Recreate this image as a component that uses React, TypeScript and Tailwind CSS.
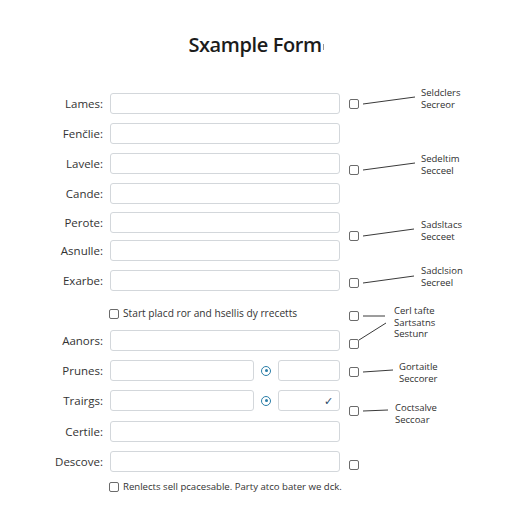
import React from 'react';

type Row = {
  label: string;
  mt: string;
  split?: boolean;
  check?: boolean;
};

const rows: Row[] = [
  { label: 'Lames:', mt: 'mt-0' },
  { label: 'Fenčlie:', mt: 'mt-[9px]' },
  { label: 'Lavele:', mt: 'mt-[9px]' },
  { label: 'Cande:', mt: 'mt-[9px]' },
  { label: 'Perote:', mt: 'mt-[8px]' },
  { label: 'Asnulle:', mt: 'mt-[7px]' },
  { label: 'Exarbe:', mt: 'mt-[9px]' },
];

const rows2: Row[] = [
  { label: 'Aanors:', mt: 'mt-[9px]' },
  { label: 'Prunes:', mt: 'mt-[9px]', split: true },
  { label: 'Trairgs:', mt: 'mt-[9px]', split: true, check: true },
  { label: 'Certile:', mt: 'mt-[10px]' },
  { label: 'Descove:', mt: 'mt-[9px]' },
];

const callouts = [
  { box: [354, 104], line: [363, 104, 415, 97], text: ['Seldclers', 'Secreor'], at: [421, 87] },
  { box: [354, 170], line: [363, 170, 415, 163], text: ['Sedeltim', 'Secceel'], at: [421, 153] },
  { box: [354, 236], line: [363, 236, 414, 229], text: ['Sadsltacs', 'Secceet'], at: [421, 219] },
  { box: [354, 283], line: [363, 283, 414, 276], text: ['Sadclsion', 'Secreel'], at: [421, 265] },
  { box: [354, 316], line: [363, 316, 385, 316], text: ['Cerl tafte', 'Sartsatns', 'Sestunr'], at: [394, 305] },
  { box: [354, 344], line: [359, 340, 386, 323], text: [], at: [0, 0] },
  { box: [354, 372], line: [363, 372, 393, 370], text: ['Gortaitle', 'Seccorer'], at: [399, 361] },
  { box: [354, 411], line: [363, 411, 388, 410], text: ['Coctsalve', 'Seccoar'], at: [395, 402] },
  { box: [354, 465], line: null, text: [], at: [0, 0] },
];

function Radio() {
  return (
    <span className="flex w-[24px] justify-center">
      <span className="flex h-[10px] w-[10px] items-center justify-center rounded-full border-[1.5px] border-[#2b7ea8]">
        <span className="h-[3px] w-[3px] rounded-full bg-[#2b7ea8]" />
      </span>
    </span>
  );
}

function FormRow({ row }: { row: Row }) {
  return (
    <div className={`flex h-[21px] items-center ${row.mt}`}>
      <label className="w-[103px] text-right text-[11.5px] text-[#333]">{row.label}</label>
      <div className="ml-[7px] flex items-center">
        {row.split ? (
          <>
            <div className="h-[21px] w-[144px] rounded-[3px] border border-[#d3d7db] bg-white" />
            <Radio />
            <div className="relative h-[21px] w-[62px] rounded-[3px] border border-[#d3d7db] bg-white">
              {row.check && (
                <span className="absolute right-[6px] top-[2px] text-[11px] text-[#2a4a6a]">✓</span>
              )}
            </div>
          </>
        ) : (
          <div className="h-[21px] w-[230px] rounded-[3px] border border-[#d3d7db] bg-white" />
        )}
      </div>
    </div>
  );
}

function CheckRow({ text, mt, size }: { text: string; mt: string; size: string }) {
  return (
    <div className={`flex h-[14px] items-center pl-[109px] ${mt}`}>
      <span className="h-[10px] w-[10px] shrink-0 rounded-[2px] border border-[#6b6b6b] bg-white" />
      <span className={`ml-[4px] whitespace-nowrap text-[#333] ${size}`}>{text}</span>
    </div>
  );
}

export default function App() {
  return (
    <div className="relative h-[512px] w-[512px] overflow-hidden bg-white font-['Open_Sans',sans-serif]">
      <div className="flex h-[28px] items-center justify-center mt-[31px]">
        <h1 className="text-[20px] font-semibold leading-[28px] tracking-[-0.4px] text-[#1c1c1c]">Sxample Form</h1>
        <span className="ml-[1px] mt-[4px] h-[6px] w-[1px] bg-[#999]" />
      </div>

      <div className="mt-[34px] flex flex-col">
        {rows.map((r) => (
          <FormRow key={r.label} row={r} />
        ))}
        <CheckRow mt="mt-[16px]" size="text-[10.2px]" text="Start placd ror and hsellis dy rrecetts" />
        {rows2.map((r) => (
          <FormRow key={r.label} row={r} />
        ))}
        <CheckRow mt="mt-[8px]" size="text-[9.6px]" text="Renlects sell pcacesable. Party atco bater we dck." />
      </div>

      {/* callout annotations on the right */}
      <svg className="pointer-events-none absolute left-0 top-0" width="512" height="512">
        {callouts.map((c, i) =>
          c.line ? (
            <line key={i} x1={c.line[0]} y1={c.line[1]} x2={c.line[2]} y2={c.line[3]} stroke="#3a3a3a" strokeWidth="1" />
          ) : null
        )}
      </svg>
      {callouts.map((c, i) => (
        <React.Fragment key={i}>
          <span
            className="absolute h-[10px] w-[10px] rounded-[2px] border border-[#6b6b6b] bg-white"
            style={{ left: c.box[0] - 5, top: c.box[1] - 5 }}
          />
          {c.text.length > 0 && (
            <div
              className="absolute text-[9.5px] font-medium leading-[11.5px] text-[#2f2f2f]"
              style={{ left: c.at[0], top: c.at[1] }}
            >
              {c.text.map((t) => (
                <div key={t}>{t}</div>
              ))}
            </div>
          )}
        </React.Fragment>
      ))}
    </div>
  );
}
